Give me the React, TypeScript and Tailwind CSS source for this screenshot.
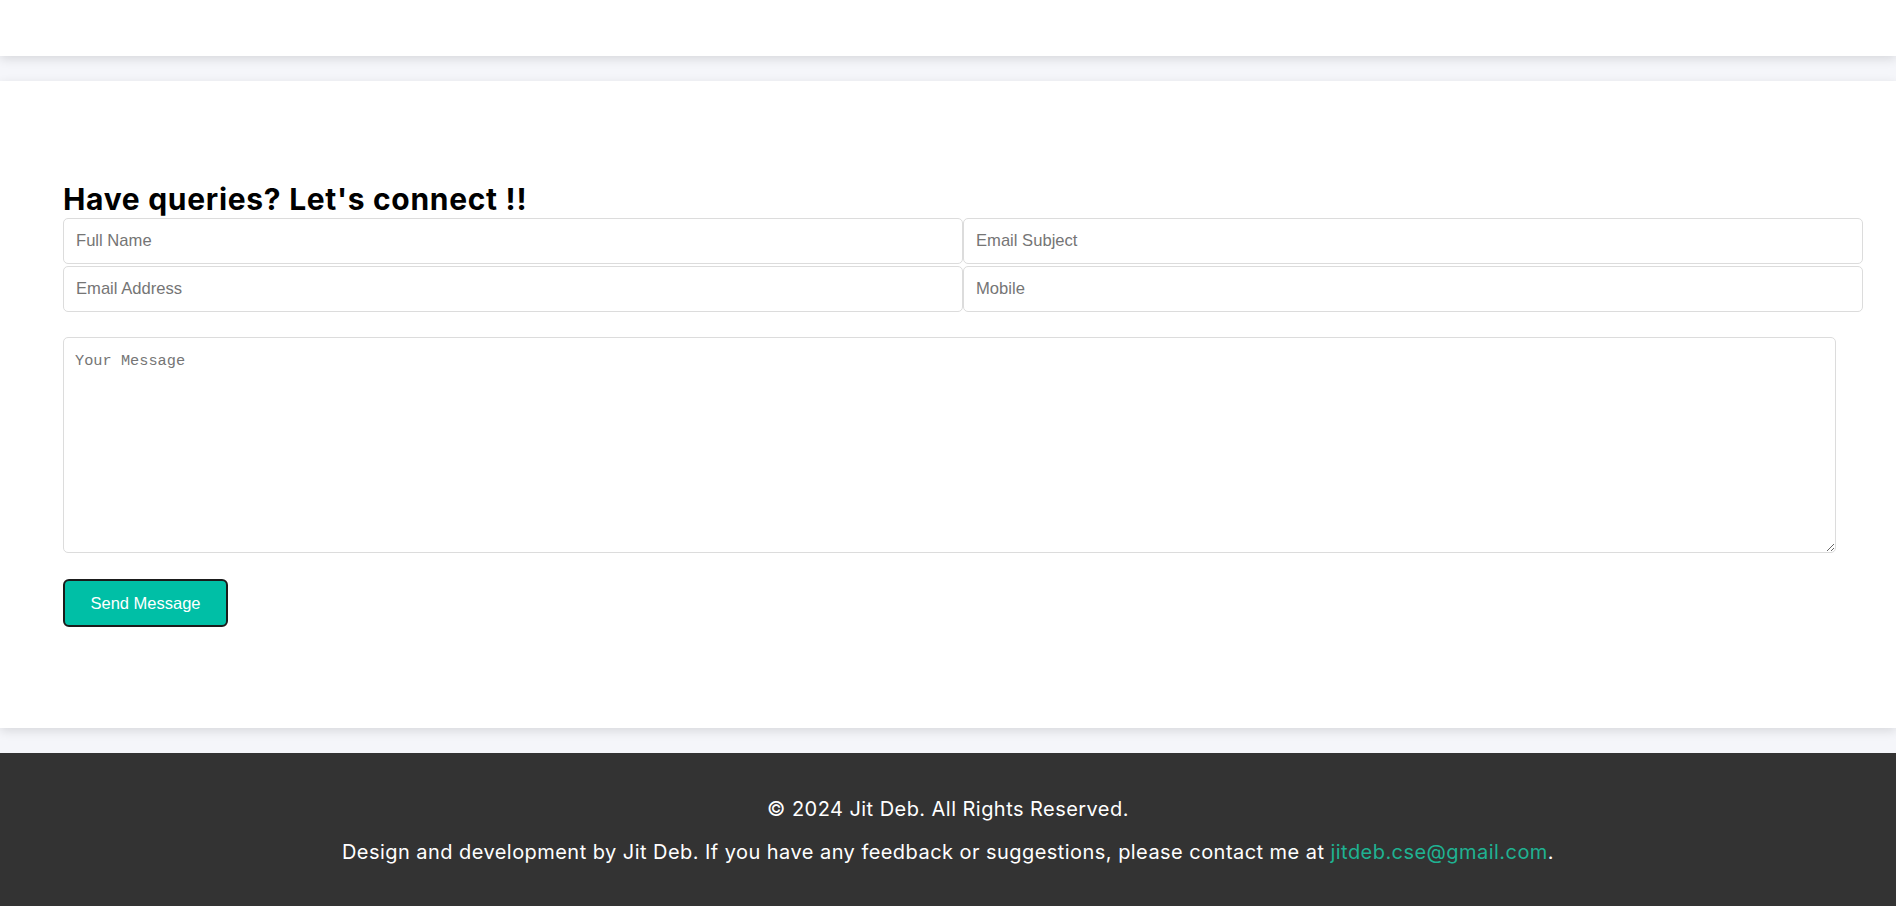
import React from "react";

export default function App() {
  return (
    <div className="min-h-[906px] w-full bg-[#f5f6fa]" style={{ fontFamily: "Inter, 'Noto Sans', sans-serif" }}>
      <header className="relative z-10 h-[56px] bg-white shadow-[0_3px_10px_rgba(0,0,0,0.12)]" />
      <div className="h-[25px]" />
      <main className="relative z-10 bg-white pl-[63px] pr-[60px] pt-[100px] pb-[101px] shadow-[0_3px_10px_rgba(0,0,0,0.12)]">
        <h2 className="h-[37px] text-[30px] font-bold leading-[37px] tracking-[0.7px] text-black">Have queries? Let's connect !!</h2>
        <form className="flex flex-col" onSubmit={(e) => e.preventDefault()}>
          <div className="grid w-[1800px] grid-cols-[900px_900px] gap-y-[2px]" style={{ fontFamily: "'Liberation Sans', Arial, sans-serif" }}>
            <input
              placeholder="Full Name"
              className="h-[46px] rounded-[5px] border border-[#dcdcdc] bg-white px-[12px] text-[16.6px] text-black outline-none placeholder:text-[#757575]"
            />
            <input
              placeholder="Email Subject"
              className="h-[46px] rounded-[5px] border border-[#dcdcdc] bg-white px-[12px] text-[16.6px] text-black outline-none placeholder:text-[#757575]"
            />
            <input
              placeholder="Email Address"
              className="h-[46px] rounded-[5px] border border-[#dcdcdc] bg-white px-[12px] text-[16.6px] text-black outline-none placeholder:text-[#757575]"
            />
            <input
              placeholder="Mobile"
              className="h-[46px] rounded-[5px] border border-[#dcdcdc] bg-white px-[12px] text-[16.6px] text-black outline-none placeholder:text-[#757575]"
            />
          </div>
          <textarea
            placeholder="Your Message"
            className="mt-[25px] h-[216px] w-[1773px] rounded-[5px] border border-[#dcdcdc] bg-white px-[11px] pt-[13px] pb-[11px] text-[15.3px] leading-[20px] text-black outline-none placeholder:text-[#757575]"
            style={{ fontFamily: "'Liberation Mono', 'DejaVu Sans Mono', monospace" }}
          />
          <div className="mt-[26px]">
            <button
              type="submit"
              className="h-[48px] w-[165px] rounded-[6px] border-2 border-[#1b1b1b] bg-[#00bfa6] text-[16.5px] text-white"
              style={{ fontFamily: "'Liberation Sans', Arial, sans-serif" }}
            >
              Send Message
            </button>
          </div>
        </form>
      </main>
      <div className="h-[25px]" />
      <footer className="flex h-[153px] flex-col items-center bg-[#333333] pt-[42px] text-[20px] leading-[28px] tracking-[0.45px] text-white">
        <p>© 2024 Jit Deb. All Rights Reserved.</p>
        <p className="mt-[15px]">
          Design and development by Jit Deb. If you have any feedback or suggestions, please contact me at{" "}
          <a href="#" className="text-[#1fb292]">jitdeb.cse@gmail.com</a>.
        </p>
      </footer>
    </div>
  );
}
